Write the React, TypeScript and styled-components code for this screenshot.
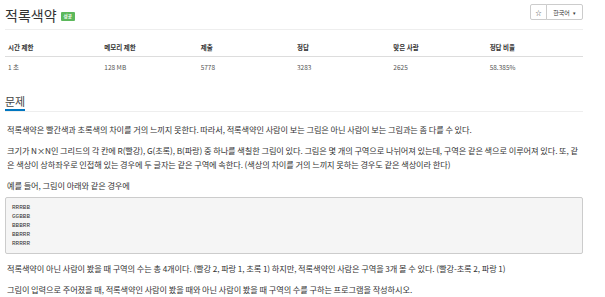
import { createGlobalStyle, styled } from 'styled-components';

const GlobalStyle = createGlobalStyle`
  body {
    margin: 0;
    background: #fff;
    font-family: "Noto Sans CJK KR", "Noto Sans", sans-serif;
    color: #333;
  }
`;

const stats = [
  { label: '시간 제한', value: '1 초' },
  { label: '메모리 제한', value: '128 MB' },
  { label: '제출', value: '5778' },
  { label: '정답', value: '3283' },
  { label: '맞은 사람', value: '2625' },
  { label: '정답 비율', value: '58.385%' },
];

const sample = ['RRRBB', 'GGBBB', 'BBBRR', 'BBRRR', 'RRRRR'];

export default function App() {
  return (
    <>
      <GlobalStyle />
      <Page>
        <Header>
          <TitleRow>
            <Title>적록색약</Title>
            <Badge>성공</Badge>
          </TitleRow>
          <ButtonGroup>
            <ToolButton $narrow>☆</ToolButton>
            <ToolButton>
              한국어 <Caret>▾</Caret>
            </ToolButton>
          </ButtonGroup>
        </Header>

        <StatsTable>
          <thead>
            <tr>
              {stats.map((s) => (
                <Th key={s.label}>{s.label}</Th>
              ))}
            </tr>
          </thead>
          <tbody>
            <tr>
              {stats.map((s) => (
                <Td key={s.label}>{s.value}</Td>
              ))}
            </tr>
          </tbody>
        </StatsTable>

        <Section>
          <SectionHeader>
            <SectionTitle>문제</SectionTitle>
          </SectionHeader>
          <Body>
            <P>
              적록색약은 빨간색과 초록색의 차이를 거의 느끼지 못한다. 따라서, 적록색약인 사람이 보는
              그림은 아닌 사람이 보는 그림과는 좀 다를 수 있다.
            </P>
            <P>
              크기가 N×N인 그리드의 각 칸에 R(빨강), G(초록), B(파랑) 중 하나를 색칠한 그림이 있다.
              그림은 몇 개의 구역으로 나뉘어져 있는데, 구역은 같은 색으로 이루어져 있다. 또, 같은
              색상이 상하좌우로 인접해 있는 경우에 두 글자는 같은 구역에 속한다. (색상의 차이를 거의
              느끼지 못하는 경우도 같은 색상이라 한다)
            </P>
            <P>예를 들어, 그림이 아래와 같은 경우에</P>
            <Pre>{sample.join('\n')}</Pre>
            <P>
              적록색약이 아닌 사람이 봤을 때 구역의 수는 총 4개이다. (빨강 2, 파랑 1, 초록 1) 하지만,
              적록색약인 사람은 구역을 3개 볼 수 있다. (빨강-초록 2, 파랑 1)
            </P>
            <P>
              그림이 입력으로 주어졌을 때, 적록색약인 사람이 봤을 때와 아닌 사람이 봤을 때 구역의 수를
              구하는 프로그램을 작성하시오.
            </P>
          </Body>
        </Section>
      </Page>
    </>
  );
}

const Page = styled.div`
  width: 578px;
  margin-left: 5px;
`;

const Header = styled.div`
  display: flex;
  justify-content: space-between;
  align-items: flex-start;
  padding: 5px 0 4px;
  border-bottom: 1px solid #eee;
`;

const TitleRow = styled.div`
  display: flex;
  align-items: center;
  gap: 4px;
  height: 20px;
`;

const Title = styled.h1`
  margin: 0;
  font-size: 14px;
  line-height: 20px;
  font-weight: 400;
  color: #333;
`;

const Badge = styled.span`
  margin-top: 3px;
  background: #5cb85c;
  color: #fff;
  font-size: 4.5px;
  line-height: 9px;
  padding: 0 3px;
  border-radius: 1px;
  font-weight: 700;
`;

const ButtonGroup = styled.div`
  display: flex;
  margin-top: -1px;
`;

const ToolButton = styled.div<{ $narrow?: boolean }>`
  display: flex;
  align-items: center;
  justify-content: center;
  gap: 3px;
  height: 14px;
  width: ${(p) => (p.$narrow ? '15px' : '35px')};
  border: 1px solid #ccc;
  margin-left: -1px;
  font-size: 6px;
  color: #333;
  background: #fff;
  &:first-child {
    border-radius: 2px 0 0 2px;
  }
  &:last-child {
    border-radius: 0 2px 2px 0;
  }
`;

const Caret = styled.span`
  font-size: 5px;
`;

const StatsTable = styled.table`
  width: 100%;
  margin-top: 9px;
  border-collapse: collapse;
  table-layout: fixed;
`;

const Th = styled.th`
  text-align: left;
  font-size: 6.5px;
  font-weight: 700;
  line-height: 17px;
  padding: 0 3px;
  border-bottom: 1px solid #ddd;
  color: #333;
`;

const Td = styled.td`
  font-size: 6.5px;
  line-height: 20px;
  padding: 0 3px;
  color: #555;
`;

const Section = styled.section`
  margin-top: 10px;
`;

const SectionHeader = styled.div`
  border-bottom: 1px solid #eee;
`;

const SectionTitle = styled.h3`
  display: inline-block;
  margin: 0 0 -1px;
  font-size: 11px;
  line-height: 16px;
  font-weight: 400;
  color: #444;
  border-bottom: 2px solid #0076c0;
`;

const Body = styled.div`
  padding: 10px 0 0 2px;
`;

const P = styled.p`
  margin: 0 0 7px;
  font-size: 8.2px;
  line-height: 14px;
  letter-spacing: -0.08px;
  color: #333;
`;

const Pre = styled.pre`
  margin: -2px 0 7px -2px;
  padding: 5px 6px;
  background: #f5f5f5;
  border: 1px solid #ccc;
  border-radius: 2px;
  font-family: "Liberation Mono", monospace;
  font-size: 6px;
  line-height: 9px;
  color: #333;
`;
